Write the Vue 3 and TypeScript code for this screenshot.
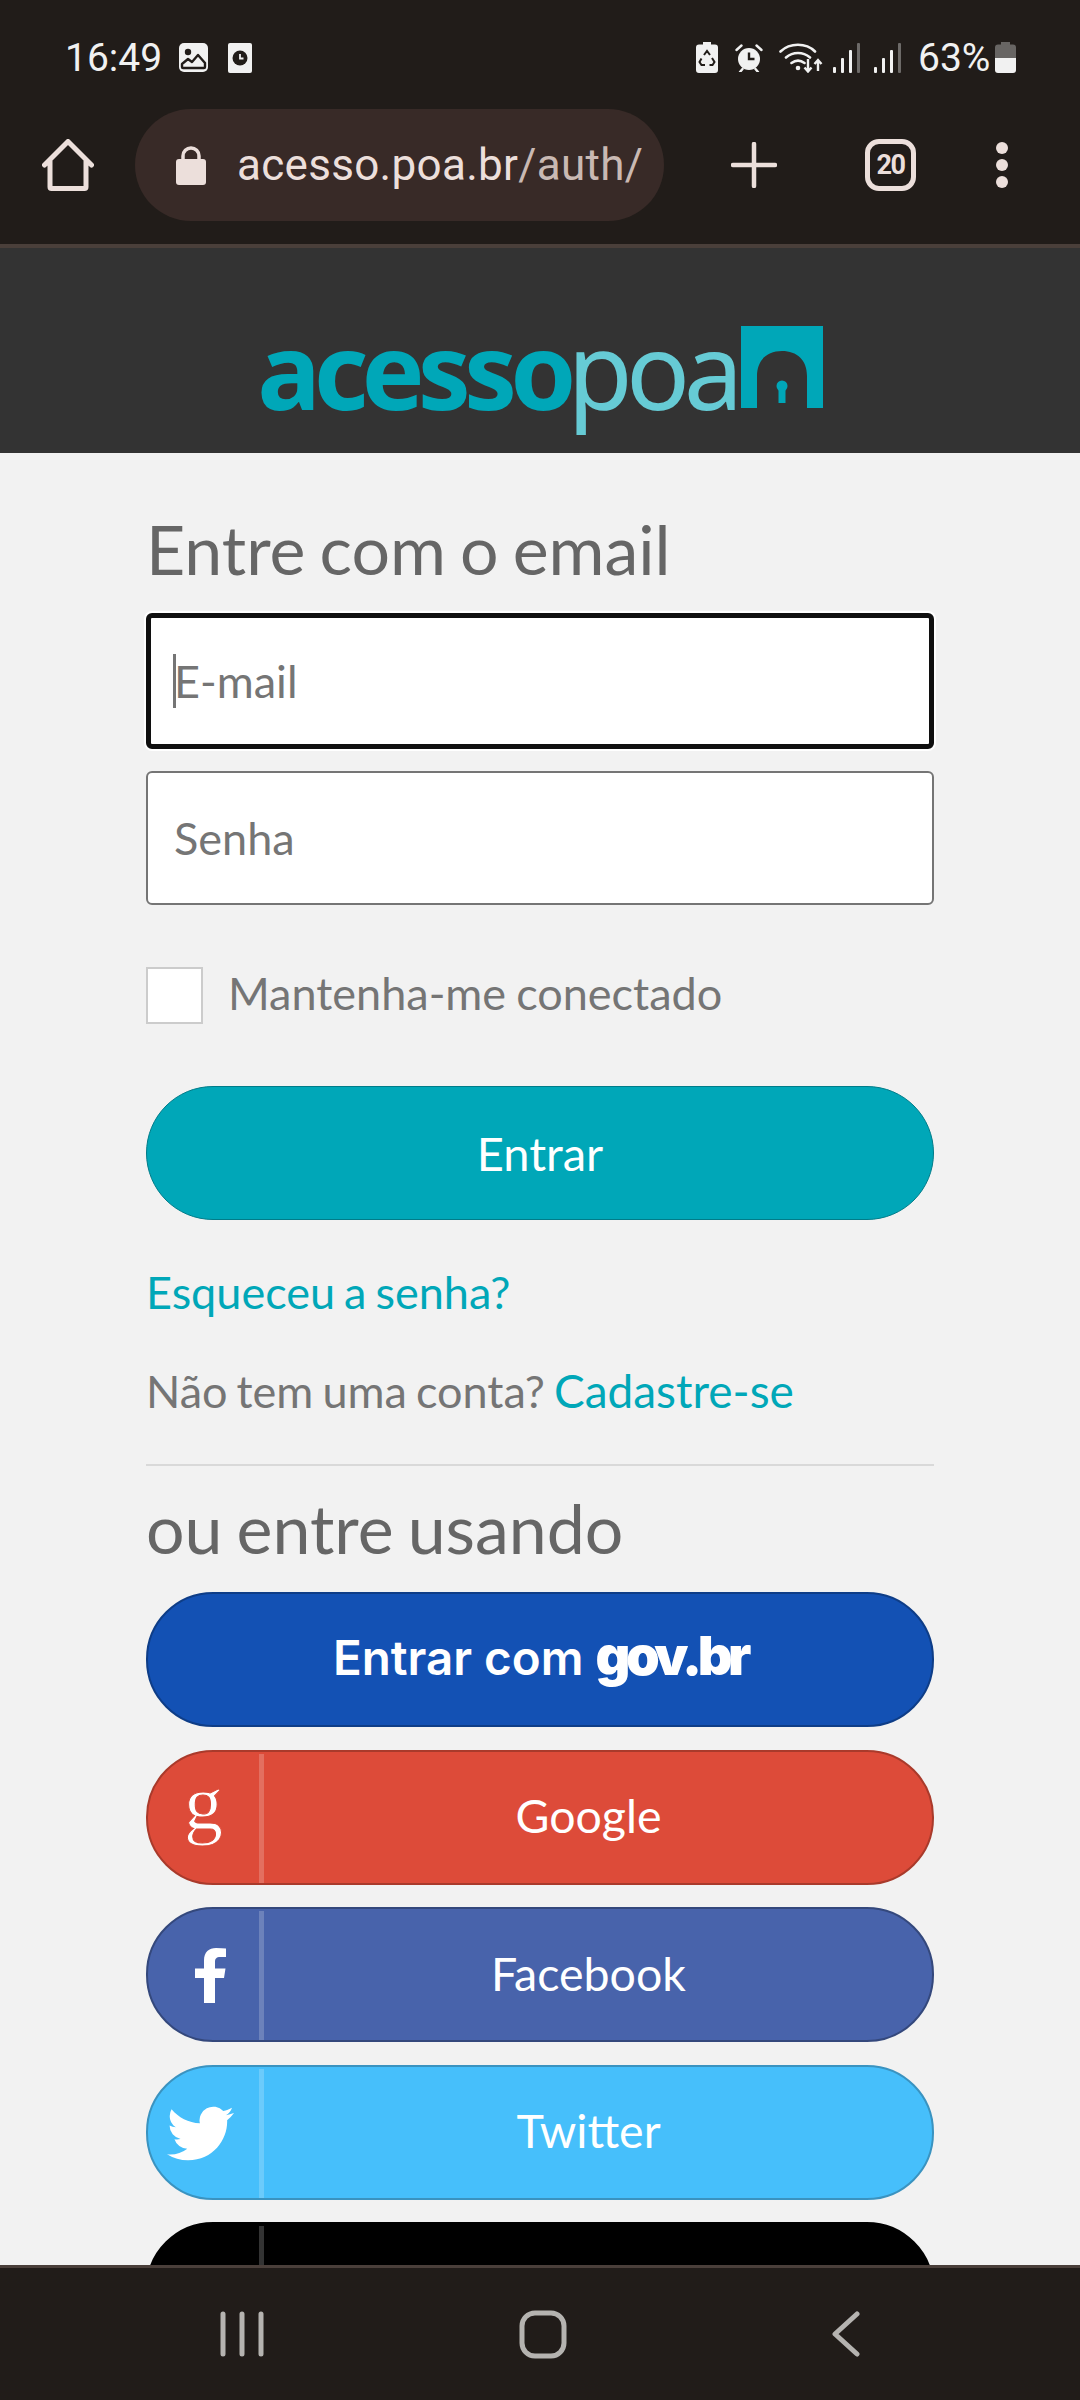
<script setup lang="ts">
type SocialLogin = {
  name: string
  cls: string
}

const socials: SocialLogin[] = [
  { name: 'Google', cls: 'google' },
  { name: 'Facebook', cls: 'facebook' },
  { name: 'Twitter', cls: 'twitter' },
  { name: '', cls: 'apple' }
]
</script>

<template>
  <div class="screen">
    <div class="browser-top">
      <div class="status-bar">
        <div class="status-left">
          <span class="time">16:49</span>
          <svg class="ic-photo" viewBox="0 0 29 29">
            <rect width="29" height="29" rx="5" fill="#f1f1f1" />
            <circle cx="9" cy="9" r="3.2" fill="#211c19" />
            <path d="M3 24v-3l6-5 4 3 6-7 7 8v4q0 1-1 1H4q-1 0-1-1z" fill="none" stroke="#211c19" stroke-width="2.4" stroke-linejoin="round" />
          </svg>
          <svg class="ic-clockcard" viewBox="0 0 24 30">
            <rect width="24" height="30" rx="2" fill="#f1f1f1" />
            <circle cx="12" cy="15" r="7.5" fill="#211c19" />
            <path d="M12 11v4.5h3.5" fill="none" stroke="#f1f1f1" stroke-width="1.8" />
          </svg>
        </div>
        <div class="status-right">
          <svg class="ic-saver" viewBox="0 0 22 31">
            <path d="M7 0h8v2.500h4q3 0 3 3V28q0 3-3 3H3q-3 0-3-3V5.500q0-3 3-3h4z" fill="#f1f1f1" />
            <path d="M8 13l3-4 3 4M16 16l2.500 4-2 3h-3M9 23H5.500l-2-3 2-3.500" fill="none" stroke="#211c19" stroke-width="2" />
          </svg>
          <svg class="ic-alarm" viewBox="0 0 28 28">
            <circle cx="14" cy="15" r="11" fill="#f1f1f1" />
            <path d="M14 8.500V15h5.500" fill="none" stroke="#211c19" stroke-width="2.4" />
            <path d="M1.500 6l5-4.500M26.500 6l-5-4.500M5 28l2.500-3M23 28l-2.500-3" stroke="#f1f1f1" stroke-width="2.4" stroke-linecap="round" />
          </svg>
          <svg class="ic-wifi" viewBox="0 0 44 31">
            <path d="M1.500 9.500C11 .5 27 .5 36 9.500M7 15.500c7-6 17-6 24 0M12.500 21c4-3 9-3 13 0" fill="none" stroke="#f1f1f1" stroke-width="2.600" stroke-linecap="round" />
            <circle cx="19" cy="26" r="2.300" fill="#f1f1f1" />
            <path d="M29 17v12M25.500 25.500l3.500 4 3.500-4M39 29V18M35.500 22l3.500-4 3.500 4" fill="none" stroke="#f1f1f1" stroke-width="2.400" />
          </svg>
          <svg class="ic-signal" viewBox="0 0 27 30">
            <rect x="0" y="24" width="3" height="6" rx="1" fill="#f1f1f1" />
            <rect x="8" y="15" width="3" height="15" rx="1" fill="#f1f1f1" />
            <rect x="16" y="7" width="3" height="23" rx="1" fill="#f1f1f1" />
            <rect x="24" y="0" width="3" height="30" rx="1" fill="#6d6a68" />
          </svg>
          <svg class="ic-signal second" viewBox="0 0 27 30">
            <rect x="0" y="24" width="3" height="6" rx="1" fill="#f1f1f1" />
            <rect x="8" y="15" width="3" height="15" rx="1" fill="#f1f1f1" />
            <rect x="16" y="7" width="3" height="23" rx="1" fill="#f1f1f1" />
            <rect x="24" y="0" width="3" height="30" rx="1" fill="#6d6a68" />
          </svg>
          <span class="percent">63%</span>
          <svg class="ic-battery" viewBox="0 0 21 31">
            <path d="M6 0h9v2.500h3q3 0 3 3V16H0V5.500q0-3 3-3h3z" fill="#686563" />
            <path d="M0 16h21v12q0 3-3 3H3q-3 0-3-3z" fill="#f1f1f1" />
          </svg>
        </div>
      </div>
      <div class="toolbar">
        <svg class="ic-home" viewBox="0 0 52 52">
          <path d="M2.500 26L26 2.500 49.500 26M8 22v26q0 1.500 1.500 1.500h33q1.500 0 1.500-1.500V22" fill="none" stroke="#ecdfdb" stroke-width="5" stroke-linecap="round" stroke-linejoin="round" />
        </svg>
        <div class="url-pill">
          <svg class="ic-lock" viewBox="0 0 30 40">
            <path d="M7 17V11a8 8 0 0 1 16 0v6" fill="none" stroke="#ecdfdb" stroke-width="3.500" />
            <rect y="14" width="30" height="26" rx="3" fill="#ecdfdb" />
          </svg>
          <div class="url"><span class="host">acesso.poa.br</span>/auth/</div>
        </div>
        <svg class="ic-plus" viewBox="0 0 46 46">
          <path d="M23 2v42M2 23h42" stroke="#ecdfdb" stroke-width="4.500" stroke-linecap="round" />
        </svg>
        <div class="tabs-box">20</div>
        <div class="dots"><i></i><i></i><i></i></div>
      </div>
    </div>

    <header class="logo-bar">
      <div class="logo">
        <span class="logo-bold">acesso</span><span class="logo-light">poa</span>
        <svg class="door" viewBox="0 0 82 82">
          <path d="M0 0h82v82H66V50C66 34 56 25 41 25S16 34 16 50v32H0z" fill="#00a7b8" />
          <circle cx="41" cy="60" r="5.500" fill="#00a7b8" />
          <path d="M37.500 62h7v15h-7z" fill="#00a7b8" />
        </svg>
      </div>
    </header>

    <main class="content">
      <h1 class="title">Entre com o email</h1>
      <div class="field focused"><span class="caret"></span>E-mail</div>
      <div class="field">Senha</div>
      <label class="remember">
        <span class="check"></span>
        <span class="remember-text">Mantenha-me conectado</span>
      </label>
      <button type="button" class="btn-enter">Entrar</button>
      <a class="forgot">Esqueceu a senha?</a>
      <p class="signup">Não tem uma conta? <a>Cadastre-se</a></p>
      <hr class="rule" />
      <h2 class="title alt">ou entre usando</h2>

      <div class="social-list">
        <button type="button" class="gov"><span class="gov-label">Entrar com <b>gov.br</b></span></button>
        <button v-for="s in socials" :key="s.cls" type="button" class="social" :class="s.cls">
          <span class="social-icon">
            <span v-if="s.cls === 'google'" class="g-glyph">g</span>
            <svg v-else-if="s.cls === 'facebook'" class="ic-fb" viewBox="0 0 31 55">
              <path d="M9 55V30H0v-9.500h9v-8C9 4 14 0 21 0q6 0 10 .5V9h-5.500C21 9 20 11 20 14v6.500h10.500L29 30h-9v25z" fill="#fff" />
            </svg>
            <svg v-else-if="s.cls === 'twitter'" class="ic-tw" viewBox="0 0 24 20" preserveAspectRatio="none">
              <path d="M23.953 2.570a10 10 0 0 1-2.825.775 4.958 4.958 0 0 0 2.163-2.723c-.951.555-2.005.959-3.127 1.184a4.920 4.920 0 0 0-8.384 4.482C7.690 6.095 4.067 4.130 1.640 1.162a4.822 4.822 0 0 0-.666 2.475c0 1.710.870 3.213 2.188 4.096a4.904 4.904 0 0 1-2.228-.616v.060a4.923 4.923 0 0 0 3.946 4.827 4.996 4.996 0 0 1-2.212.085 4.936 4.936 0 0 0 4.604 3.417 9.867 9.867 0 0 1-6.102 2.105c-.390 0-.779-.023-1.170-.067a13.995 13.995 0 0 0 7.557 2.209c9.053 0 13.998-7.496 13.998-13.985 0-.210 0-.420-.015-.630A9.935 9.935 0 0 0 24 2.590z" fill="#fff" />
            </svg>
            <svg v-else class="ic-apple" viewBox="0 0 22 60">
              <path d="M3 22C3 12 10 4 17 2c1 8-5 18-14 20z" fill="#fff" />
            </svg>
          </span>
          <span v-if="s.name" class="social-name">{{ s.name }}</span>
        </button>
      </div>
    </main>

    <nav class="nav-bar">
      <svg class="ic-recents" viewBox="0 0 44 46">
        <path d="M3 3v40M22 3v40M41 3v40" stroke="#b5b3b0" stroke-width="5" stroke-linecap="round" />
      </svg>
      <svg class="ic-square" viewBox="0 0 48 49">
        <rect x="3" y="3" width="42" height="43" rx="13" fill="none" stroke="#b5b3b0" stroke-width="5" />
      </svg>
      <svg class="ic-back" viewBox="0 0 28 46">
        <path d="M25 3L3 23l22 20" fill="none" stroke="#b5b3b0" stroke-width="5" stroke-linecap="round" stroke-linejoin="round" />
      </svg>
    </nav>
  </div>
</template>

<style scoped>
.screen {
  width: 1080px;
  height: 2400px;
  display: flex;
  flex-direction: column;
  overflow: hidden;
  background: #f2f2f2;
  font-family: Lato, "Liberation Sans", sans-serif;
}

.browser-top {
  height: 248px;
  flex: none;
  box-sizing: border-box;
  background: #211c19;
  border-bottom: 4px solid #4a3f3a;
}

.status-bar {
  height: 109px;
  box-sizing: border-box;
  padding: 42px 64px 0 65px;
  display: flex;
  justify-content: space-between;
  align-items: flex-start;
  color: #f1f1f1;
  font-family: Roboto, sans-serif;
}

.status-left,
.status-right {
  display: flex;
  align-items: center;
  height: 31px;
}

.time {
  font-size: 39px;
  width: 114px;
}

.ic-photo {
  width: 29px;
  height: 29px;
  margin-right: 20px;
}

.ic-clockcard {
  width: 24px;
  height: 30px;
}

.ic-saver {
  width: 22px;
  height: 31px;
  margin-right: 17px;
}

.ic-alarm {
  width: 28px;
  height: 28px;
  margin-right: 16px;
}

.ic-wifi {
  width: 44px;
  height: 31px;
  margin-right: 10px;
}

.ic-signal {
  width: 27px;
  height: 30px;
  margin-right: 14px;
}

.ic-signal.second {
  margin-right: 17px;
}

.percent {
  font-size: 39px;
  width: 77px;
  white-space: nowrap;
}

.ic-battery {
  width: 21px;
  height: 31px;
}

.toolbar {
  display: flex;
  align-items: center;
  height: 112px;
  padding-left: 42px;
}

.ic-home {
  width: 52px;
  height: 52px;
  margin-right: 41px;
}

.url-pill {
  width: 529px;
  height: 112px;
  flex: none;
  box-sizing: border-box;
  padding: 0 10px 0 41px;
  margin-right: 67px;
  border-radius: 56px;
  background: #382a27;
  display: flex;
  align-items: center;
}

.ic-lock {
  width: 30px;
  height: 40px;
  margin-right: 31px;
  flex: none;
}

.url {
  font-family: Roboto, sans-serif;
  font-size: 44px;
  letter-spacing: 0.3px;
  color: #c9b9b3;
  white-space: nowrap;
}

.host {
  color: #ecdfdb;
}

.ic-plus {
  width: 46px;
  height: 46px;
  margin-right: 88px;
}

.tabs-box {
  width: 51px;
  height: 52px;
  box-sizing: border-box;
  border: 5px solid #ecdfdb;
  border-radius: 14px;
  margin-right: 80px;
  display: flex;
  align-items: center;
  justify-content: center;
  color: #ecdfdb;
  font-family: Roboto, sans-serif;
  font-size: 27px;
  font-weight: 700;
  letter-spacing: -1.5px;
}

.dots {
  display: flex;
  flex-direction: column;
  gap: 5px;
}

.dots i {
  display: block;
  width: 12px;
  height: 12px;
  border-radius: 50%;
  background: #ecdfdb;
}

.logo-bar {
  height: 205px;
  flex: none;
  background: #333;
  display: flex;
  justify-content: center;
}

.logo {
  display: flex;
  align-items: flex-start;
  height: 205px;
  font-family: "Noto Sans", "Open Sans", sans-serif;
  font-size: 106px;
  line-height: 243px;
}

.logo-bold {
  color: #00a7b8;
  font-weight: 700;
  letter-spacing: -7px;
}

.logo-light {
  color: #66cbd5;
  font-weight: 400;
  letter-spacing: -6.5px;
  margin-left: -2px;
}

.door {
  width: 82px;
  height: 82px;
  margin: 78px 0 0 4px;
}

.content {
  flex: 1;
  min-height: 0;
  overflow: hidden;
  padding: 0 146px;
}

.title {
  margin: 0;
  padding: 56px 0 0;
  height: 82px;
  font-size: 68px;
  line-height: 80px;
  font-weight: 400;
  word-spacing: -3.3px;
  color: #666;
}

.field {
  height: 134px;
  box-sizing: border-box;
  border: 2px solid #757575;
  border-radius: 6px;
  background: #fff;
  padding-left: 26px;
  display: flex;
  align-items: center;
  color: #757575;
  font-size: 45px;
  margin-bottom: 22px;
}

.field.focused {
  height: 136px;
  margin-top: 22px;
  border: 5px solid #101010;
  box-shadow: 0 0 0 2px #fff;
  padding-left: 22px;
  margin-bottom: 22px;
}

.caret {
  width: 3px;
  height: 54px;
  background: #757575;
  margin-right: -2px;
}

.remember {
  display: flex;
  align-items: center;
  margin-top: 62px;
  color: #757575;
  font-size: 45px;
  word-spacing: -1.5px;
}

.remember-text {
  margin-top: -6px;
}

.check {
  width: 57px;
  height: 57px;
  box-sizing: border-box;
  border: 2px solid #ccc;
  background: #fff;
  margin-right: 25px;
}

.btn-enter {
  display: block;
  width: 100%;
  height: 134px;
  margin-top: 62px;
  border: 1px solid #007c89;
  border-radius: 67px;
  background: #00a7b8;
  color: #fff;
  font-family: inherit;
  font-size: 47px;
}

.forgot {
  display: block;
  margin-top: 44px;
  color: #00a7b8;
  font-size: 45px;
  line-height: 56px;
  word-spacing: -2.5px;
}

.signup {
  margin: 43px 0 0;
  color: #757575;
  font-size: 45px;
  line-height: 56px;
  word-spacing: -2.5px;
}

.signup a {
  color: #00a7b8;
  font-size: 46px;
}

.rule {
  margin: 45px 0 0;
  border: none;
  border-top: 2px solid #d9d9d9;
}

.title.alt {
  padding: 22px 0 0;
  height: 80px;
}

.social-list {
  display: flex;
  flex-direction: column;
  gap: 22.6px;
  margin-top: 24px;
}

.gov,
.social {
  width: 100%;
  height: 135px;
  flex: none;
  padding: 0;
  border-radius: 67px;
  color: #fff;
  font-family: inherit;
  font-size: 46.5px;
}

.gov {
  background: #1351b4;
  border: 2px solid #0e3d87;
  font-family: Inter, sans-serif;
  font-size: 47.5px;
  font-weight: 600;
}

.gov-label {
  display: block;
  margin-top: -8px;
}

.gov b {
  font-size: 54px;
  font-weight: 900;
  letter-spacing: -4.5px;
}

.social {
  display: flex;
  align-items: stretch;
  border-width: 2px;
  border-style: solid;
}

.social-icon {
  width: 111px;
  flex: none;
  border-right: 5px solid rgba(255, 255, 255, 0.2);
  margin: 2px 0 0;
  display: flex;
  align-items: center;
  justify-content: center;
}

.social-name {
  flex: 1;
  padding: 0 19px 4px 0;
  display: flex;
  align-items: center;
  justify-content: center;
}

.g-glyph {
  font-family: "Liberation Serif", serif;
  font-size: 78px;
  line-height: 1;
  margin-top: -30px;
  -webkit-text-stroke: 1px #dd4b39;
}

.ic-fb {
  width: 31px;
  height: 55px;
  margin-left: 13px;
}

.ic-tw {
  width: 67px;
  height: 55px;
  margin-left: -6px;
}

.ic-apple {
  width: 22px;
  height: 60px;
  margin-top: 10px;
  margin-left: 6px;
}

.google {
  background: #dd4b39;
  border-color: #a93a2b;
}

.facebook {
  background: #4863ab;
  border-color: #34487c;
}

.twitter {
  background: #46bffb;
  border-color: #3a93c0;
}

.apple {
  background: #000;
  border-color: #000;
}

.nav-bar {
  height: 135px;
  flex: none;
  box-sizing: border-box;
  border-top: 3px solid #4a3f3a;
  background: #211c19;
  display: flex;
  align-items: center;
  justify-content: space-between;
  padding: 0 220px;
}

.ic-recents {
  width: 44px;
  height: 46px;
}

.ic-square {
  width: 48px;
  height: 49px;
  margin-right: 10px;
}

.ic-back {
  width: 28px;
  height: 46px;
}
</style>
